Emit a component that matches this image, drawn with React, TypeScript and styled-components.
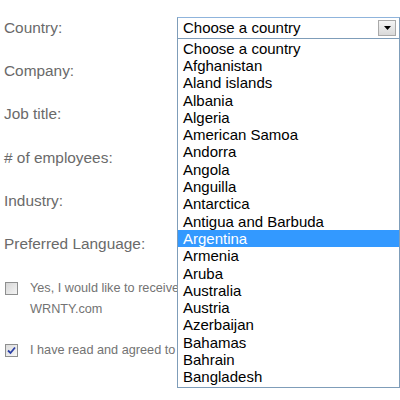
import styled, { createGlobalStyle } from "styled-components";

const GlobalStyle = createGlobalStyle`
  html, body {
    margin: 0;
    padding: 0;
    background: #ffffff;
  }
  body {
    font-family: "Liberation Sans", Arial, sans-serif;
    width: 400px;
    height: 400px;
    overflow: hidden;
  }
`;

const countries = [
  "Choose a country",
  "Afghanistan",
  "Aland islands",
  "Albania",
  "Algeria",
  "American Samoa",
  "Andorra",
  "Angola",
  "Anguilla",
  "Antarctica",
  "Antigua and Barbuda",
  "Argentina",
  "Armenia",
  "Aruba",
  "Australia",
  "Austria",
  "Azerbaijan",
  "Bahamas",
  "Bahrain",
  "Bangladesh",
];

const fields = [
  "Company:",
  "Job title:",
  "# of employees:",
  "Industry:",
  "Preferred Language:",
];

const App = () => {
  return (
    <>
      <GlobalStyle />
      <Form>
        <Row>
          <Label>Country:</Label>
          <SelectWrap>
            <SelectBox>
              <SelectText>Choose a country</SelectText>
              <ArrowButton>
                <svg width="7" height="4" viewBox="0 0 7 4">
                  <path d="M0 0 H7 L3.5 4 Z" fill="#000" />
                </svg>
              </ArrowButton>
            </SelectBox>
            <DropList>
              {countries.map((c) => (
                <Option key={c} selected={c === "Argentina"}>
                  {c}
                </Option>
              ))}
            </DropList>
          </SelectWrap>
        </Row>
        {fields.map((f) => (
          <Row key={f}>
            <Label>{f}</Label>
          </Row>
        ))}
        <Checks>
          <CheckRow>
            <Box />
            <CheckText>
              Yes, I would like to receive updates and special offers from
              <br />
              WRNTY.com
            </CheckText>
          </CheckRow>
          <CheckRow>
            <Box checked>
              <svg width="9" height="9" viewBox="0 0 9 9">
                <path
                  d="M1 4.5 L3.5 7 L8 1.5"
                  stroke="#2b3fa6"
                  strokeWidth="1.8"
                  fill="none"
                />
              </svg>
            </Box>
            <CheckText>I have read and agreed to the Terms of Use</CheckText>
          </CheckRow>
        </Checks>
      </Form>
    </>
  );
};
export default App;

const Form = styled.div`
  display: flex;
  flex-direction: column;
  padding: 6px 0 0 4px;
`;

const Row = styled.div`
  display: flex;
  align-items: center;
  height: 43.3px;
`;

const Label = styled.div`
  width: 173px;
  flex-shrink: 0;
  font-size: 15.4px;
  color: #6a6a6a;
  white-space: nowrap;
`;

const SelectWrap = styled.div`
  position: relative;
  width: 223px;
`;

const SelectBox = styled.div`
  display: flex;
  align-items: center;
  justify-content: space-between;
  height: 22px;
  box-sizing: border-box;
  border: 1px solid #7f9db9;
  border-top-color: #8fb4dc;
  padding: 0 3px 0 5px;
  background: #fff;
`;

const SelectText = styled.span`
  font-size: 15px;
  color: #000;
`;

const ArrowButton = styled.div`
  display: flex;
  align-items: center;
  justify-content: center;
  width: 18px;
  height: 16px;
  box-sizing: border-box;
  border: 1px solid #a9a9a9;
  background: linear-gradient(#f4f4f4, #d9d9d9);
`;

const DropList = styled.div`
  position: absolute;
  top: 21px;
  left: 0;
  z-index: 2;
  width: 100%;
  box-sizing: border-box;
  border: 1px solid #7f9db9;
  background: #fff;
  padding: 1px 0;
  display: flex;
  flex-direction: column;
`;

const Option = styled.div<{ selected?: boolean }>`
  height: 17.3px;
  line-height: 17.3px;
  padding-left: 5px;
  font-size: 15px;
  white-space: nowrap;
  color: ${(p) => (p.selected ? "#ffffff" : "#000000")};
  background: ${(p) => (p.selected ? "#3399ff" : "transparent")};
`;

const Checks = styled.div`
  display: flex;
  flex-direction: column;
  gap: 20px;
  margin-top: 12px;
  padding-left: 1px;
`;

const CheckRow = styled.div`
  display: flex;
  align-items: flex-start;
  gap: 12px;
  width: 172px;
  overflow: hidden;
`;

const Box = styled.div<{ checked?: boolean }>`
  width: 13px;
  height: 13px;
  margin-top: 4px;
  flex-shrink: 0;
  box-sizing: border-box;
  border: 1px solid #8e8f8f;
  background: ${(p) =>
    p.checked
      ? "linear-gradient(135deg, #dcdcdc, #f7f7f7)"
      : "linear-gradient(135deg, #d6d6d6, #f4f4f4)"};
  display: flex;
  align-items: center;
  justify-content: center;
`;

const CheckText = styled.div`
  font-size: 12.7px;
  line-height: 21px;
  color: #737373;
  white-space: nowrap;
`;
